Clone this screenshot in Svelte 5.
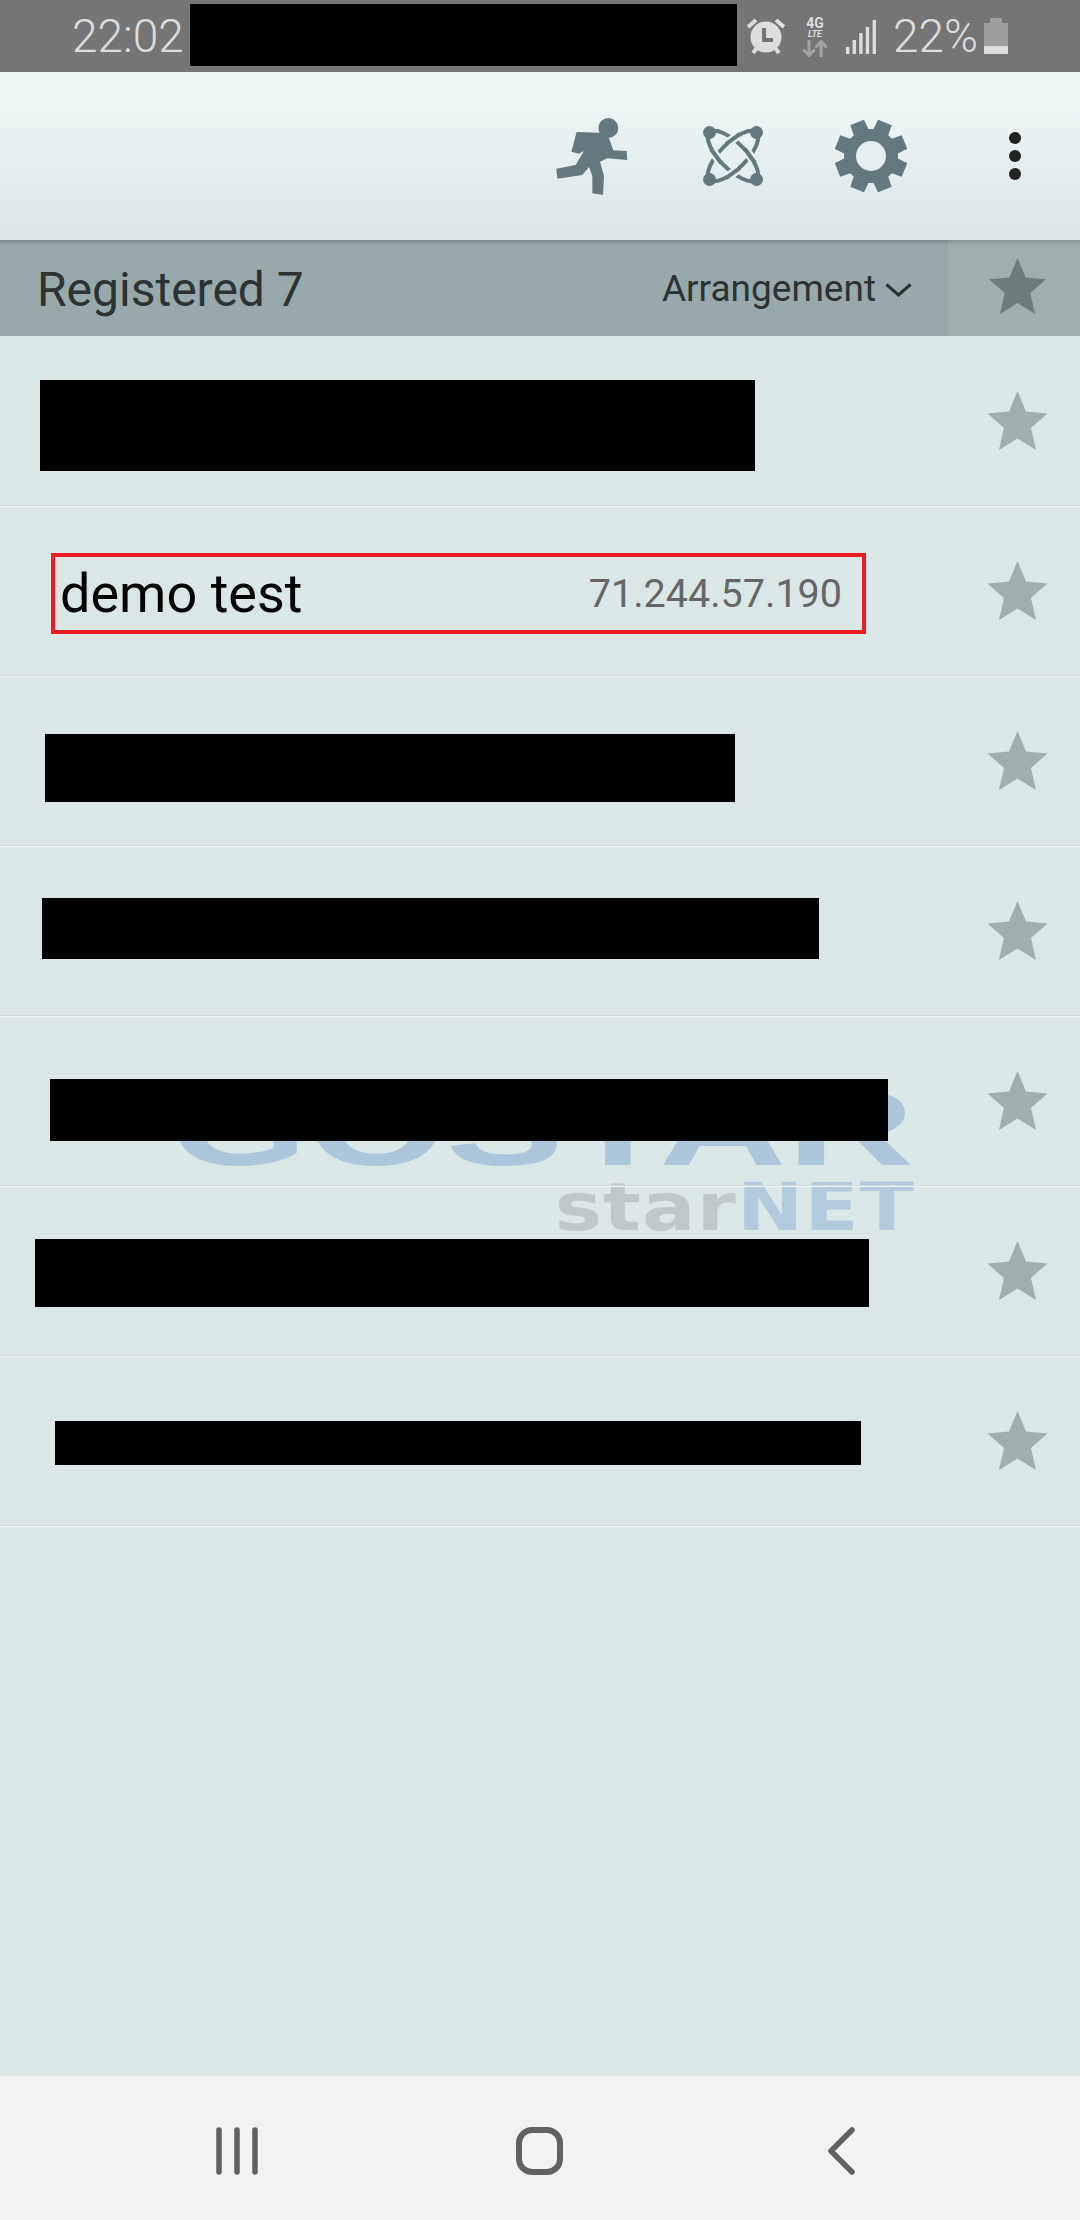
<script>
    const rows = [
        { x: 40, w: 715, h: 91, dy: 5 },
        { demo: true },
        { x: 45, w: 690, h: 68, dy: 7 },
        { x: 42, w: 777, h: 61, dy: -2 },
        { x: 50, w: 838, h: 62, dy: 9 },
        { x: 35, w: 834, h: 68, dy: 2 },
        { x: 55, w: 806, h: 44, dy: 2 }
    ];

    const starPath = 'M30 0 L38.5 20.5 L60 22.5 L43.5 37 L48.5 59 L30 47.5 L11.5 59 L16.5 37 L0 22.5 L21.5 20.5 Z';

    // gear outline, 8 teeth starting half a tooth off the vertical
    function gear(cx, cy, body, tip) {
        let d = '';
        for (let i = 0; i < 8; i++) {
            const a = (i * 45 + 22.5 - 90) * Math.PI / 180;
            const pts = [[-0.3, body], [-0.2, tip], [0.2, tip], [0.3, body]];
            for (const [o, r] of pts) {
                const x = cx + r * Math.cos(a + o);
                const y = cy + r * Math.sin(a + o);
                d += (d ? 'L' : 'M') + x.toFixed(1) + ' ' + y.toFixed(1) + ' ';
            }
        }
        return d + 'Z';
    }
    const gearPath = gear(36, 36, 27, 37);
</script>

<div class="screen">
    <header class="status">
        <span class="time">22:02</span>
        <div class="status-redact"></div>
        <svg class="alarm" viewBox="0 0 38 36" width="38" height="36">
            <circle cx="19" cy="19" r="15.5" fill="#ddd" />
            <path d="M1 9 L9 2 M37 9 L29 2" stroke="#ddd" stroke-width="4" fill="none" />
            <path d="M6 35 L10 30 M32 35 L28 30" stroke="#ddd" stroke-width="4" fill="none" />
            <path d="M17 10 V22 H26" stroke="#757575" stroke-width="4" fill="none" />
        </svg>
        <div class="net">
            <span class="net-4g">4G</span>
            <span class="net-lte">LTE</span>
            <svg viewBox="0 0 26 17" width="26" height="17">
                <path d="M7 0 V15 M1.5 9.5 L7 15.5 L12.5 9.5" stroke="#a3a3a3" stroke-width="3" fill="none" />
                <path d="M19 17 V2 M13.5 7.5 L19 1.5 L24.5 7.5" stroke="#a3a3a3" stroke-width="3" fill="none" />
            </svg>
        </div>
        <svg class="signal" viewBox="0 0 31 34" width="31" height="34">
            <rect x="0" y="27" width="3.4" height="7" fill="#ddd" />
            <rect x="6.6" y="20" width="3.4" height="14" fill="#ddd" />
            <rect x="13.2" y="13" width="3.4" height="21" fill="#ddd" />
            <rect x="19.8" y="7" width="3.4" height="27" fill="#ddd" />
            <rect x="26.6" y="0" width="3.4" height="34" fill="#ddd" />
        </svg>
        <span class="pct">22%</span>
        <div class="battery"><div class="battery-cap"></div><div class="battery-body"><div class="battery-level"></div></div></div>
    </header>

    <div class="toolbar">
        <svg class="run" viewBox="40 45 225 240" width="75" height="80">
            <circle cx="203" cy="81" r="30" fill="#64787e" />
            <path fill="#64787e" d="M108 93 L178 95 L205 112 L218 148 L258 150 L260 177 L200 172 L178 182 L190 225 L187 282 L155 277 L155 225 L145 198 L125 222 L50 233 L47 203 L105 192 L130 150 L115 158 L92 152 Z" />
        </svg>
        <svg class="atom" viewBox="-32 -32 64 64" width="64" height="64">
            <g fill="none" stroke="#64787e" stroke-width="4">
                <ellipse rx="33" ry="13" transform="rotate(45)" />
                <ellipse rx="33" ry="13" transform="rotate(-45)" />
                <path stroke="#e6eeef" stroke-width="9" d="M-5.6 -12.9 L5.6 -21.1 M-5.6 21.1 L5.6 12.9 M-21.1 -5.6 L-12.9 5.6 M12.9 -5.6 L21.1 5.6" />
                <path d="M-7 -11.9 L7 -22.1 M-7 22.1 L7 11.9 M-22.1 -7 L-11.9 7 M11.9 -7 L22.1 7" />
            </g>
            <g fill="#64787e">
                <circle cx="-23.5" cy="-23.5" r="6.5" />
                <circle cx="23.5" cy="-23.5" r="6.5" />
                <circle cx="-23.5" cy="23.5" r="6.5" />
                <circle cx="23.5" cy="23.5" r="6.5" />
            </g>
        </svg>
        <svg class="gear" viewBox="0 0 72 72" width="72" height="72">
            <path fill="#64787e" d={gearPath} />
            <circle cx="36" cy="36" r="15" fill="#e6eeef" />
        </svg>
        <div class="more"><i></i><i></i><i></i></div>
    </div>

    <div class="filter">
        <span class="registered">Registered 7</span>
        <span class="arrangement">Arrangement</span>
        <svg class="chevron" viewBox="0 0 27 14" width="27" height="14">
            <path d="M1.5 1.5 L13.5 12 L25.5 1.5" fill="none" stroke="#2d3233" stroke-width="3" />
        </svg>
        <div class="filter-star">
            <svg viewBox="0 0 60 59" width="59" height="56"><path fill="#6f7a7c" d={starPath} /></svg>
        </div>
    </div>

    <main class="list">
        <div class="watermark">
            <div class="wm-big">GOSTAR</div>
            <div class="wm-small"><span class="wm-star">star</span><span class="wm-net">NET</span></div>
        </div>
        {#each rows as row}
            <div class="row">
                {#if row.demo}
                    <div class="demo">
                        <span class="demo-name">demo test</span>
                        <span class="demo-ip">71.244.57.190</span>
                    </div>
                {:else}
                    <div class="redact" style="margin-left: {row.x}px; width: {row.w}px; height: {row.h}px; margin-top: {row.dy * 2}px"></div>
                {/if}
                <svg class="star" viewBox="0 0 60 59" width="61" height="59"><path fill="#a1adae" d={starPath} /></svg>
            </div>
        {/each}
    </main>

    <nav class="nav">
        <svg viewBox="0 0 44 48" width="44" height="48">
            <path d="M3 3 V45 M21 3 V45 M39 3 V45" stroke="#616161" stroke-width="5.5" stroke-linecap="round" fill="none" />
        </svg>
        <div class="home"></div>
        <svg viewBox="0 0 28 48" width="28" height="48">
            <path d="M25 3 L4 24 L25 45" stroke="#616161" stroke-width="5.5" stroke-linecap="round" stroke-linejoin="round" fill="none" />
        </svg>
    </nav>
</div>

<style>
    :global(body) {
        margin: 0;
    }

    .screen {
        width: 1080px;
        height: 2220px;
        display: flex;
        flex-direction: column;
        overflow: hidden;
        font-family: Roboto, sans-serif;
        background: #dbe6e7;
    }

    .status {
        height: 72px;
        flex: none;
        display: flex;
        align-items: center;
        padding-left: 72px;
        box-sizing: border-box;
        background: #757575;
        color: #ddd;
    }

    .time, .pct {
        font-size: 46px;
        font-weight: 300;
        line-height: 72px;
    }

    .time {
        width: 110px;
    }

    .status-redact {
        width: 547px;
        height: 62px;
        margin: 0 10px 2px 8px;
        background: #000;
    }

    .alarm {
        margin-right: 17px;
    }

    .net {
        width: 26px;
        margin-right: 18px;
        display: flex;
        flex-direction: column;
        align-items: center;
        line-height: 1;
        color: #ddd;
        font-weight: 700;
    }

    .net-4g {
        font-size: 14px;
    }

    .net-lte {
        font-size: 9px;
        font-style: italic;
        margin-bottom: 1px;
    }

    .signal {
        margin: 2px 16px 0 0;
    }

    .pct {
        width: 84px;
    }

    .battery {
        margin: 0 0 0 7px;
        width: 24px;
    }

    .battery-cap {
        width: 12px;
        height: 5px;
        margin: 0 auto;
        background: #9e9e9e;
    }

    .battery-body {
        height: 31px;
        display: flex;
        align-items: flex-end;
        background: #9e9e9e;
    }

    .battery-level {
        width: 100%;
        height: 8px;
        background: #ddd;
    }

    .toolbar {
        height: 168px;
        flex: none;
        display: flex;
        align-items: center;
        background: linear-gradient(#f1f8f8, #dbe5e6);
        box-sizing: border-box;
        padding-left: 554px;
    }

    .run {
        margin: 0 72px 0 0;
    }

    .atom {
        margin-right: 70px;
    }

    .gear {
        margin-right: 102px;
    }

    .more {
        display: flex;
        flex-direction: column;
        gap: 6px;
    }

    .more i {
        width: 12px;
        height: 12px;
        border-radius: 50%;
        background: #222;
    }

    .filter {
        height: 96px;
        flex: none;
        display: flex;
        align-items: center;
        background: linear-gradient(#7f8f92, #99a8ab 6px);
        color: #2d3233;
    }

    .registered {
        margin-left: 37px;
        margin-top: 2px;
        font-size: 48px;
        flex: 1;
    }

    .arrangement {
        font-size: 37px;
    }

    .chevron {
        margin: 4px 36px 0 9px;
    }

    .filter-star {
        width: 132px;
        height: 100%;
        box-sizing: border-box;
        padding: 0 0 4px 6px;
        display: flex;
        align-items: center;
        justify-content: center;
        background: linear-gradient(#8b9798, #a1adae 6px);
    }

    .list {
        flex: 1;
        position: relative;
    }

    .watermark {
        position: absolute;
        left: 170px;
        top: 742px;
        width: 745px;
    }

    .wm-big {
        font-family: "Liberation Sans", sans-serif;
        font-weight: 700;
        font-size: 108px;
        line-height: 100px;
        color: #aec6da;
        white-space: nowrap;
        transform: scaleX(1.64);
        transform-origin: left;
    }

    .wm-small {
        font-family: "DejaVu Sans", sans-serif;
        font-weight: 700;
        font-size: 66px;
        line-height: 60px;
        text-align: right;
        letter-spacing: 1px;
        transform: scaleX(1.2);
        transform-origin: right;
    }

    .wm-star {
        color: #c0c8ca;
    }

    .wm-net {
        color: #b3cbdd;
    }

    .row {
        position: relative;
        height: 170px;
        box-sizing: border-box;
        display: flex;
        align-items: center;
        justify-content: space-between;
        border-bottom: 1px solid #d3dada;
        box-shadow: 0 1px 0 #eef3f3;
    }

    .redact {
        background: #000;
    }

    .demo {
        width: 815px;
        height: 81px;
        margin: 6px 0 0 51px;
        box-sizing: border-box;
        border: 4.5px solid #ee1c25;
        display: flex;
        align-items: center;
        justify-content: space-between;
        padding: 0 20px 0 5px;
    }

    .demo-name {
        font-size: 54px;
        color: #000;
    }

    .demo-ip {
        font-size: 39.5px;
        color: #666;
    }

    .star {
        margin-right: 32px;
    }

    .nav {
        height: 144px;
        flex: none;
        box-sizing: border-box;
        display: flex;
        align-items: center;
        background: #f2f2f2;
        padding: 6px 0 0 216px;
    }

    .home {
        width: 47px;
        height: 48px;
        box-sizing: border-box;
        border: 6px solid #616161;
        border-radius: 16px;
        margin: 0 264px 0 256px;
    }
</style>
